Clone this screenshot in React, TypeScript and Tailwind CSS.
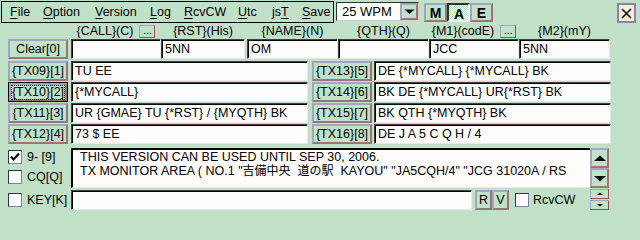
import React from 'react';

const face = 'bg-[#c0e2c8]';
const raised =
  'border-2 border-t-[#a4a4c4] border-l-[#a4a4c4] border-r-[#9c7474] border-b-[#9c7474]';
const sunken =
  'border border-t-[#404040] border-l-[#404040] border-r-[#e8e8e8] border-b-[#e8e8e8] shadow-[inset_1px_1px_0_#000] bg-[#fffcfc]';

function Menu({ k, rest, w, pre = '' }: { k: string; rest: string; w: string; pre?: string }) {
  return (
    <span className={`${w} shrink-0 whitespace-nowrap`}>
      {pre}
      <span className="underline underline-offset-2">{k}</span>
      {rest}
    </span>
  );
}

function Btn({ label, w, focused = false }: { label: string; w: string; focused?: boolean }) {
  if (focused) {
    return (
      <div className={`${w} h-[20px] border border-black flex`}>
        <div className={`flex-1 ${face} ${raised} flex items-center justify-center text-[12.5px] whitespace-nowrap`}>
          <span className="outline outline-1 outline-dotted outline-black leading-[13px]">{label}</span>
        </div>
      </div>
    );
  }
  return (
    <div className={`${w} h-[20px] ${face} ${raised} flex items-center justify-center whitespace-nowrap text-[12.5px]`}>
      {label}
    </div>
  );
}

function Field({ w, value }: { w: string; value: string }) {
  return (
    <div className={`${w} h-[20px] ${sunken} flex items-center pl-[3px] whitespace-nowrap overflow-hidden`}>
      {value}
    </div>
  );
}

function Check({ checked = false }: { checked?: boolean }) {
  return (
    <div className="w-[14px] h-[14px] bg-white border border-t-[#303050] border-l-[#303050] border-r-[#8080a0] border-b-[#8080a0] flex items-center justify-center">
      {checked && (
        <svg width="10" height="10" viewBox="0 0 10 10">
          <path d="M1 4.5 L3.5 7.5 L9 1.5" stroke="#000" strokeWidth="2" fill="none" />
        </svg>
      )}
    </div>
  );
}

function Arrow({ up, size = 'big' }: { up: boolean; size?: 'big' | 'small' | 'mid' }) {
  const dims = { big: [14, 9, 5], mid: [11, 7, 4], small: [8, 6, 2] }[size];
  const [w, h, a] = dims;
  const m = w / 2;
  const d = up
    ? `M${m - a - 1} ${h / 2 + a / 2} L${m} ${h / 2 - a / 2 - 0.5} L${m + a + 1} ${h / 2 + a / 2} Z`
    : `M${m - a - 1} ${h / 2 - a / 2} L${m} ${h / 2 + a / 2 + 0.5} L${m + a + 1} ${h / 2 - a / 2} Z`;
  return (
    <svg width={w} height={h} viewBox={`0 0 ${w} ${h}`}>
      <path d={d} fill="#000" />
    </svg>
  );
}

const cols = [
  { w: 'w-[90px]', label: '{CALL}(C)', dots: true, value: '' },
  { w: 'w-[84px]', label: '{RST}(His)', dots: false, value: '5NN' },
  { w: 'w-[91px]', label: '{NAME}(N)', dots: false, value: 'OM' },
  { w: 'w-[91px]', label: '{QTH}(Q)', dots: false, value: '' },
  { w: 'w-[90px]', label: '{M1}(codE)', dots: true, value: 'JCC' },
  { w: 'w-[91px]', label: '{M2}(mY)', dots: false, value: '5NN' },
];

const txRows = [
  ['{TX09}[1]', 'TU EE', '{TX13}[5]', 'DE {*MYCALL} {*MYCALL} BK'],
  ['{TX10}[2]', '{*MYCALL}', '{TX14}[6]', 'BK DE {*MYCALL} UR{*RST} BK'],
  ['{TX11}[3]', 'UR {GMAE} TU {*RST} / {MYQTH} BK', '{TX15}[7]', 'BK QTH {*MYQTH} BK'],
  ['{TX12}[4]', '73 $ EE', '{TX16}[8]', 'DE J A 5 C Q H / 4'],
];

export default function App() {
  return (
    <div
      className="w-[640px] h-[240px] bg-[#c0e0c8] text-black text-[12.5px] leading-none overflow-hidden"
      style={{ fontFamily: '"Liberation Sans", "Noto Sans CJK JP", sans-serif' }}
    >
      {/* top bar */}
      <div className="flex items-start pt-[1px] pl-[1px]">
        <div className="w-[333px] h-[22px] border border-black flex items-center pl-[8px]">
          <Menu k="F" rest="ile" w="w-[33px]" />
          <Menu k="O" rest="ption" w="w-[52px]" />
          <Menu k="V" rest="ersion" w="w-[55px]" />
          <Menu k="L" rest="og" w="w-[34px]" />
          <Menu k="R" rest="cvCW" w="w-[54px]" />
          <Menu k="U" rest="tc" w="w-[34px]" />
          <Menu pre="js" k="T" rest="" w="w-[30px]" />
          <Menu k="S" rest="ave" w="w-[30px]" />
        </div>
        <div className="ml-[2px] mt-[1px] w-[83px] h-[19px] bg-white border border-t-[#303030] border-l-[#303030] border-r-[#d0d0d0] border-b-[#d0d0d0] flex items-center">
          <span className="flex-1 pl-[5px] text-[13px]">25 WPM</span>
          <div className={`w-[18px] h-[17px] ${face} ${raised} flex items-center justify-center`}>
            <Arrow up={false} size="mid" />
          </div>
        </div>
        <div className="ml-[5px] mt-[2px] flex font-bold text-[14px]">
          <div className={`w-[23px] h-[19px] ${face} ${raised} flex items-center justify-center`}>M</div>
          <div className="w-[23px] h-[19px] border-2 border-t-[#303030] border-l-[#303030] border-r-[#f0f0f0] border-b-[#f0f0f0] bg-[repeating-conic-gradient(#ffffff_0%_25%,#c0e0c8_0%_50%)] bg-[length:2px_2px] flex items-center justify-center pt-[2px] pl-[1px]">
            A
          </div>
          <div className={`w-[23px] h-[19px] ${face} ${raised} flex items-center justify-center`}>E</div>
        </div>
        <div className="flex-1" />
        <div className="mt-[2px] mr-[4px] w-[19px] h-[20px] bg-[#f4eedc] border-2 border-[#8c84a8] flex items-center justify-center">
          <svg width="11" height="11" viewBox="0 0 11 11">
            <path d="M1 1 L10 10 M10 1 L1 10" stroke="#000" strokeWidth="1.5" />
          </svg>
        </div>
      </div>

      {/* field labels */}
      <div className="flex pl-[71px] mt-[1px] h-[14px]">
        {cols.map((c, i) => (
          <div key={i} className={`${c.w} flex items-center justify-center gap-[6px] ${i === 1 ? 'mr-[2px]' : ''}`}>
            <span className="whitespace-nowrap">{c.label}</span>
            {c.dots && (
              <div className={`w-[16px] h-[13px] ${face} border border-t-[#a4a4c4] border-l-[#a4a4c4] border-r-[#9c5050] border-b-[#9c5050] flex items-end justify-center text-[11px] pb-[1px]`}>
                ...
              </div>
            )}
          </div>
        ))}
      </div>

      {/* clear row */}
      <div className="flex pl-[8px] mt-[1px] gap-[3px]">
        <Btn label="Clear[0]" w="w-[60px]" />
        <div className="flex">
          {cols.map((c, i) => (
            <div key={i} className={i === 1 ? 'mr-[2px]' : ''}>
              <Field w={c.w} value={c.value} />
            </div>
          ))}
        </div>
      </div>

      {/* TX rows */}
      <div className="flex flex-col gap-[1px] mt-[2px] pl-[8px]">
        {txRows.map((r, i) => (
          <div key={i} className="flex">
            <Btn label={r[0]} w="w-[60px]" focused={i === 1} />
            <div className="ml-[3px]">
              <Field w="w-[237px]" value={r[1]} />
            </div>
            <div className="ml-[4px]">
              <Btn label={r[2]} w="w-[60px]" />
            </div>
            <div className="ml-[2px]">
              <Field w="w-[237px]" value={r[3]} />
            </div>
          </div>
        ))}
      </div>

      {/* monitor area */}
      <div className="flex mt-[4px] pl-[8px]">
        <div className="w-[63px] flex flex-col gap-[6px] pt-[2px]">
          <div className="flex items-center gap-[5px]">
            <Check checked />
            <span>9- [9]</span>
          </div>
          <div className="flex items-center gap-[5px]">
            <Check />
            <span>CQ[Q]</span>
          </div>
        </div>
        <div className="w-[519px] h-[40px] border-t-2 border-l-2 border-t-black border-l-black border-b border-b-[#e8e8e8] bg-[#fffcfc] pl-[7px] pt-[1px] flex flex-col gap-[1px] overflow-hidden whitespace-pre leading-[13px]">
          <span>THIS VERSION CAN BE USED UNTIL SEP 30, 2006.</span>
          <span>
            TX MONITOR AREA ( NO.1 "<span className="text-[12px]">吉備中央</span>  <span className="text-[12px]">道の駅</span>  KAYOU" "JA5CQH/4" "JCG 31020A / RS
          </span>
        </div>
        <div className="w-[19px] h-[40px] flex flex-col">
          <div className={`h-[20px] ${face} ${raised} flex items-center justify-center`}>
            <Arrow up />
          </div>
          <div className={`h-[20px] ${face} ${raised} flex items-center justify-center`}>
            <Arrow up={false} />
          </div>
        </div>
      </div>

      {/* key row */}
      <div className="flex mt-[2px] pl-[8px] items-start">
        <div className="w-[63px] flex items-center gap-[5px] pt-[3px]">
          <Check />
          <span>KEY[K]</span>
        </div>
        <Field w="w-[401px]" value="" />
        <div className="ml-[3px] flex">
          <div className={`w-[17px] h-[20px] ${face} ${raised} flex items-center justify-center`}>R</div>
          <div className={`w-[17px] h-[20px] ${face} ${raised} flex items-center justify-center`}>V</div>
        </div>
        <div className="ml-[6px] flex items-center gap-[4px] pt-[3px]">
          <Check />
          <span>RcvCW</span>
        </div>
        <div className="flex-1" />
        <div className="mr-[31px] -mt-[1px] w-[19px] flex flex-col gap-[1px]">
          <div className={`h-[10px] ${face} border border-t-[#a4a4c4] border-l-[#a4a4c4] border-r-[#9c5050] border-b-[#9c5050] flex items-center justify-center`}>
            <Arrow up size="small" />
          </div>
          <div className={`h-[10px] ${face} border border-t-[#a4a4c4] border-l-[#a4a4c4] border-r-[#9c5050] border-b-[#9c5050] flex items-center justify-center`}>
            <Arrow up={false} size="small" />
          </div>
        </div>
      </div>
    </div>
  );
}
